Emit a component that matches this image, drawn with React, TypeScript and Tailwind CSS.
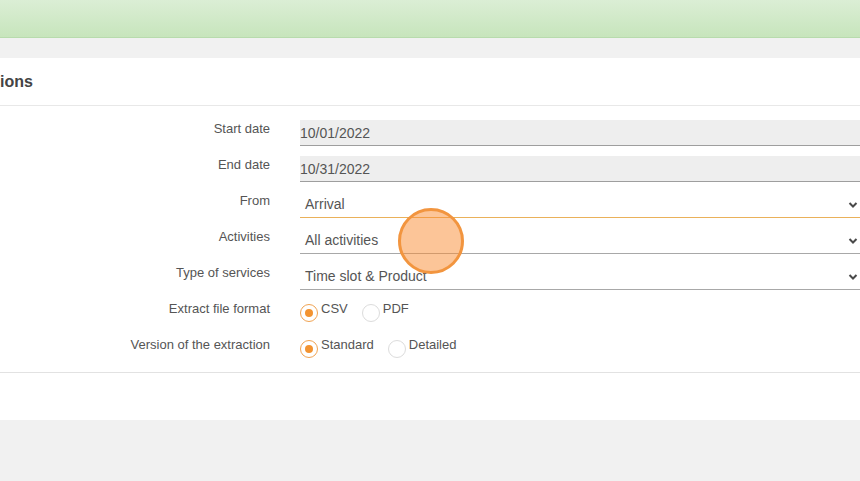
import React from "react";

const font = { fontFamily: '"Liberation Sans", Arial, sans-serif' };

function Chevron() {
  return (
    <svg className="absolute right-[2px] top-1/2 -translate-y-1/2" width="10" height="7" viewBox="0 0 10 7">
      <polyline points="1.5,1.5 5,5 8.5,1.5" fill="none" stroke="#4a4a4a" strokeWidth="2" />
    </svg>
  );
}

function Row({ label, children }: { label: string; children: React.ReactNode }) {
  return (
    <div className="flex items-start">
      <div className="w-[270px] shrink-0 text-right text-[13px] leading-4 pt-px text-[#555]">{label}</div>
      <div className="ml-[30px] flex-1 min-w-0">{children}</div>
    </div>
  );
}

function DateInput({ value }: { value: string }) {
  return (
    <div className="h-[26px] bg-[#eeeeee] border-b border-[#9e9e9e] flex items-center text-[14px] text-[#555] pt-px">
      {value}
    </div>
  );
}

function Select({ value, active }: { value: string; active?: boolean }) {
  return (
    <div
      className={`relative h-[26px] bg-white border-b flex items-center pl-[5px] text-[14px] text-[#555] ${
        active ? "border-[#eab15a]" : "border-[#a8a8a8]"
      }`}
    >
      {value}
      <Chevron />
    </div>
  );
}

function Radio({ checked, label }: { checked?: boolean; label: string }) {
  return (
    <div className="flex items-start mr-[14px]">
      <div
        className={`mt-[4px] w-[18px] h-[18px] rounded-full border flex items-center justify-center bg-white ${
          checked ? "border-[#f0a352]" : "border-[#dcdcdc]"
        }`}
      >
        {checked && <div className="w-[8px] h-[8px] rounded-full bg-[#f39330]" />}
      </div>
      <span className="ml-[3px] pt-px text-[13px] leading-4 text-[#555]">{label}</span>
    </div>
  );
}

export default function App() {
  return (
    <div className="relative w-[860px] h-[481px] overflow-hidden bg-[#f1f1f1]" style={font}>
      <div className="h-[38px] bg-gradient-to-b from-[#dbeed5] to-[#c7e5bc] border-b border-[#b8dbad]" />
      <div className="h-[20px] bg-[#f1f1f1]" />
      <div className="bg-white h-[362px]">
        <div className="h-[48px] border-b border-[#e8e8e8] flex items-center pt-px">
          <span className="text-[16px] font-bold text-[#444]">ions</span>
        </div>
        <div className="pt-[14px] flex flex-col gap-[10px] border-b border-[#e2e2e2] pb-[10px]">
          <Row label="Start date">
            <DateInput value="10/01/2022" />
          </Row>
          <Row label="End date">
            <DateInput value="10/31/2022" />
          </Row>
          <Row label="From">
            <Select value="Arrival" active />
          </Row>
          <Row label="Activities">
            <Select value="All activities" />
          </Row>
          <Row label="Type of services">
            <Select value="Time slot & Product" />
          </Row>
          <Row label="Extract file format">
            <div className="flex h-[26px]">
              <Radio checked label="CSV" />
              <Radio label="PDF" />
            </div>
          </Row>
          <Row label="Version of the extraction">
            <div className="flex h-[26px]">
              <Radio checked label="Standard" />
              <Radio label="Detailed" />
            </div>
          </Row>
        </div>
      </div>
      <div className="absolute left-[398px] top-[208px] w-[66px] h-[66px] rounded-full border-[3px] border-[#f2953f] bg-[rgba(250,140,50,0.5)]" />
    </div>
  );
}
